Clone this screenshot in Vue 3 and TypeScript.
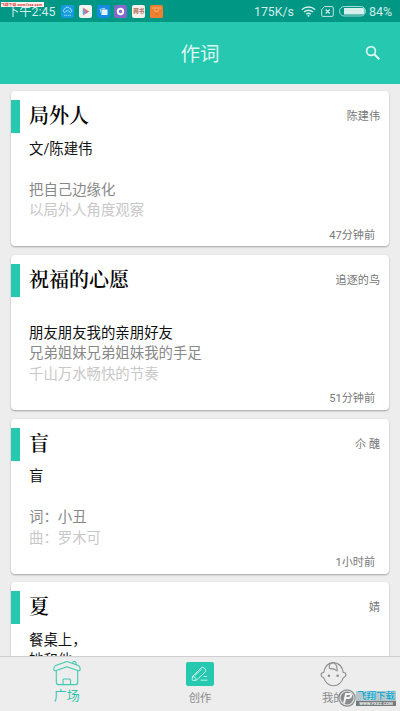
<script setup lang="ts">
interface Post {
  title: string
  author: string
  time: string
  lines: [string, string, string, string]
}

const posts: Post[] = [
  { title: '局外人', author: '陈建伟', time: '47分钟前', lines: ['文/陈建伟', '', '把自己边缘化', '以局外人角度观察'] },
  { title: '祝福的心愿', author: '追逐的鸟', time: '51分钟前', lines: ['', '朋友朋友我的亲朋好友', '兄弟姐妹兄弟姐妹我的手足', '千山万水畅快的节奏'] },
  { title: '盲', author: '尒 醜', time: '1小时前', lines: ['盲', '', '词：小丑', '曲：罗木可'] },
  { title: '夏', author: '婧', time: '1小时前', lines: ['餐桌上，', '她和他', '', ''] },
]
</script>

<template>
  <div class="screen">
    <div class="status">
      <span class="clock">下午2:45</span>
      <div class="apps">
        <svg class="app" viewBox="0 0 13 13">
          <rect width="13" height="13" rx="2" fill="#159be0" />
          <path d="M3.5 7.5a2 2 0 0 1 .3-3.6 2.7 2.7 0 0 1 5-.2 2 2 0 0 1 .8 3.8L6.5 5.5z" fill="none" stroke="#b9e6fa" stroke-width=".9" />
          <path d="M3 10.3h7" stroke="#8bd2f3" stroke-width="1" stroke-dasharray="1.5 .4" />
        </svg>
        <svg class="app" viewBox="0 0 13 13">
          <rect width="13" height="13" rx="2" fill="#f1f4f1" />
          <path d="M3.8 2.5v8l3-4z" fill="#52a9dc" />
          <path d="M3.8 2.5l6.5 4-3 1.5z" fill="#ec6a5b" />
          <path d="M3.8 10.5l3.5-4.2 1.5 1.3z" fill="#a565b9" />
        </svg>
        <svg class="app" viewBox="0 0 13 13">
          <rect width="13" height="13" rx="2" fill="#168be0" />
          <path d="M2.5 4l5-1.2.8 1.3H4v5z" fill="#a9dafa" />
          <rect x="4.5" y="4.5" width="6" height="5.5" rx=".5" fill="#e5f6ff" />
        </svg>
        <svg class="app" viewBox="0 0 13 13">
          <rect width="13" height="13" rx="2" fill="#8269cb" />
          <circle cx="6.5" cy="6.5" r="2.7" fill="none" stroke="#fff" stroke-width="2" />
        </svg>
        <span class="app read">网书</span>
        <svg class="app" viewBox="0 0 13 13">
          <rect width="13" height="13" rx="1.5" fill="#ef7f31" />
          <path d="M2 3h9M4.5 4.5a2 2 0 0 0 4 0" fill="none" stroke="#f9bc86" stroke-width=".9" />
          <path d="M5 9h3" stroke="#d9631b" stroke-width=".8" />
        </svg>
      </div>
      <span class="speed">175K/s</span>
      <svg class="wifi" viewBox="0 0 15 11">
        <g fill="none" stroke="#d3eeea" stroke-width="1.4">
          <path d="M.8 3.7a9.8 9.8 0 0 1 13.4 0" />
          <path d="M3 6a6.6 6.6 0 0 1 9 0" />
          <path d="M5.2 8.2a3.4 3.4 0 0 1 4.6 0" />
        </g>
        <circle cx="7.5" cy="9.7" r="1" fill="#d3eeea" />
      </svg>
      <svg class="sim" viewBox="0 0 13 11">
        <path d="M3.5.6H11a1.3 1.3 0 0 1 1.3 1.3v7.2a1.3 1.3 0 0 1-1.3 1.3H2A1.3 1.3 0 0 1 .7 9.1V3.4z" fill="none" stroke="#bfe5e0" />
        <path d="M4.7 3.5l4 4m0-4l-4 4" stroke="#d3eeea" stroke-width="1.2" />
      </svg>
      <svg class="battery" viewBox="0 0 27 11">
        <rect x=".5" y=".5" width="26" height="9.5" rx="4.7" fill="none" stroke="#a5dad3" />
        <path d="M5 2h18.5a2 2 0 0 1 2 2v2.500a2 2 0 0 1-2 2H5z" fill="#d6efec" />
      </svg>
      <span class="percent">84%</span>
      <span class="stamp">飞翔下载 www.fxxz.com</span>
    </div>

    <header class="bar">
      <h1>作词</h1>
      <svg class="search" viewBox="0 0 16 16">
        <circle cx="6" cy="6" r="4.4" fill="none" stroke="#def8f3" stroke-width="1.7" />
        <path d="M9.3 9.3l5 5" stroke="#def8f3" stroke-width="2" />
      </svg>
    </header>

    <main class="feed">
      <article v-for="post in posts" :key="post.title" class="card">
        <div class="top">
          <h2>{{ post.title }}</h2>
          <span class="author">{{ post.author }}</span>
        </div>
        <div class="lyrics">
          <p v-for="(line, i) in post.lines" :key="i">{{ line }}</p>
        </div>
        <div class="time">{{ post.time }}</div>
      </article>
    </main>

    <nav class="tabs">
      <div class="tab active">
        <svg viewBox="0 0 28 26">
          <g fill="none" stroke="#42c9b1" stroke-width="1.1" stroke-linejoin="round" stroke-linecap="round">
            <path d="M14 1.500L2.600 5.500Q.7 6.500.8 9.800q.5 1.300 2.500.7L14 6.800l10.700 3.700q2 .6 2.500-.7.100-3.300-1.800-4.300z" />
            <path d="M3.300 10.700v11.600a2.300 2.300 0 0 0 2.300 2.300h16.800a2.300 2.300 0 0 0 2.300-2.300V10.700" />
            <path d="M10 24.500V20a1 1 0 0 1 1-1h5.500a1 1 0 0 1 1 1v4.500M19.500 3.300q0-2 1.800-2t1.900 3.400" />
          </g>
        </svg>
        <span>广场</span>
      </div>
      <div class="tab">
        <svg viewBox="0 0 28 26">
          <rect y="1" width="28" height="24" rx="2" fill="#26c8af" />
          <g fill="none" stroke="#c4f5eb" stroke-width="1" stroke-linejoin="round" stroke-linecap="round">
            <path d="M6.500 15.500l8.800-8.800q1.500-1 3 .3l1 1.200q1 1.300 0 2.600l-8.700 8.300-3.700.5q-1.400-.6-.4-4.100z" />
            <path d="M7 15.300q2.800.2 3.300 3.500M9 14.500l6.500-6.300M15 19.200h6M18 15.500h2.500" />
          </g>
        </svg>
        <span>创作</span>
      </div>
      <div class="tab mine">
        <svg viewBox="0 0 28 26">
          <g fill="none" stroke="#8b8b8b" stroke-width="1.1" stroke-linecap="round" stroke-linejoin="round">
            <path d="M3.800 11.500C5 5.500 8.500 1.400 13.500 1.200 19 1.200 23 5 24.200 11.500c3.600.3 3.600 4.300 0 5.300C22.300 22.500 18.500 25.200 14 25.200S5.700 22.500 3.800 16.800C.2 15.800.2 11.800 3.800 11.500z" />
            <path d="M13.200 1.300C9.800 2.300 8.500 5 10.200 7.500c2.300-.2 5.300.4 7.600 2.300.2-3-.2-6-3-8.300" />
          </g>
          <circle cx="9.300" cy="14.800" r="1.300" fill="#8b8b8b" />
          <circle cx="18.300" cy="14.800" r="1.300" fill="#8b8b8b" />
        </svg>
        <span>我的</span>
      </div>
      <div class="watermark">
        <svg viewBox="0 0 18 18">
          <circle cx="9" cy="9" r="8.700" fill="#868b8c" />
          <circle cx="9" cy="9" r="7" fill="none" stroke="#dce1e1" stroke-width="1.2" />
          <path d="M6 14.500L8 5h5.500M7.200 9h3.500q2.500-.3 2.500-3.500" fill="none" stroke="#f3f3f3" stroke-width="2" />
        </svg>
        <div class="label"><b>飞翔下载</b><small>WWW.FXXZ.COM</small></div>
      </div>
    </nav>
  </div>
</template>

<style>
body {
  margin: 0;
  overflow: hidden;
}
</style>

<style scoped>
.screen {
  width: 400px;
  height: 711px;
  display: flex;
  flex-direction: column;
  overflow: hidden;
  background: #ededed;
  font-family: Roboto, "Noto Sans CJK SC", sans-serif;
}
h1, h2, p { margin: 0; font-weight: 400; }
.status {
  position: relative;
  flex: none;
  display: flex;
  align-items: center;
  box-sizing: border-box;
  height: 22px;
  padding: 1px 7px 0 7px;
  background: #009785;
  color: #d3eeea;
  font-size: 12px;
  line-height: 20px;
  white-space: nowrap;
}
.clock { width: 54px; padding-top: 1px; font-size: 12.3px; line-height: 19px; }
.apps { display: flex; gap: 4.8px; flex: 1; }
.app { display: block; width: 13px; height: 13px; }
.read {
  border-radius: 2px;
  background: #f6efea;
  color: #b36b5c;
  font-size: 5.5px;
  font-weight: 700;
  line-height: 12px;
  text-align: center;
}
.speed { width: 47px; font-size: 12.3px; }
.wifi { width: 15px; height: 11px; margin-right: 5px; }
.sim { width: 13px; height: 11px; margin-right: 5px; }
.battery { width: 27px; height: 11px; margin-right: 3px; }
.percent { width: 24px; font-size: 12.5px; }
.stamp {
  position: absolute;
  left: 1px;
  top: 2px;
  width: 43px;
  height: 5px;
  overflow: hidden;
  background: #fbf6f3;
  color: #d83a37;
  font-size: 3.8px;
  font-weight: 700;
  line-height: 5px;
}
.bar {
  position: relative;
  flex: none;
  display: flex;
  align-items: center;
  justify-content: center;
  box-sizing: border-box;
  height: 62px;
  padding-top: 3px;
  background: #26c8b0;
}
h1 { color: #def8f3; font-size: 19.5px; line-height: 28px; }
.search { position: absolute; right: 19px; top: 23px; width: 16px; height: 16px; }
.feed {
  flex: 1;
  min-height: 0;
  display: flex;
  flex-direction: column;
  gap: 8.8px;
  overflow: hidden;
  padding: 7px 11px 0;
}
.card {
  flex: none;
  display: flex;
  flex-direction: column;
  box-sizing: border-box;
  height: 155px;
  padding-top: 9px;
  border-radius: 4px;
  background: #fff;
  box-shadow: 0 1px 2px rgba(0, 0, 0, .32);
}
.top {
  display: flex;
  align-items: center;
  box-sizing: border-box;
  height: 33px;
  padding: 0 9px 3px 0;
  border-left: 9px solid #26c8af;
}
h2 {
  flex: 1;
  padding-left: 9px;
  color: #050505;
  font-family: "Noto Serif CJK SC", "Noto Serif SC", "Source Han Serif SC", "AR PL UMing CN", "Noto Sans CJK SC", serif;
  font-size: 20px;
  font-weight: 600;
  line-height: 30px;
}
.author { color: #777; font-size: 11.1px; }
.lyrics { padding: 6.5px 18px 0; height: 82px; }
.lyrics p {
  height: 20.5px;
  color: #111;
  font-size: 14.4px;
  line-height: 20.5px;
  white-space: nowrap;
}
.lyrics p:nth-child(3) { color: #888; }
.lyrics p:nth-child(4) { color: #c8c8c8; }
.time { padding: 6px 14px 0; color: #777; font-size: 11.1px; line-height: 16px; text-align: right; }
.tabs {
  position: relative;
  flex: none;
  display: flex;
  box-sizing: border-box;
  height: 55px;
  padding-top: 3px;
  border-top: 1px solid #cfcfcf;
  background: #ededed;
}
.tab {
  flex: 1;
  display: flex;
  flex-direction: column;
  align-items: center;
  color: #8b8b8b;
  font-size: 11.3px;
  line-height: 16px;
}
.tab svg { width: 28px; height: 26px; margin-top: 1px; }
.tab span { margin-top: 4px; }
.active { color: #36c5ad; font-size: 13px; }
.active svg { margin-top: 0; }
.active span { margin-top: 2px; }
.mine svg { width: 27px; }
.watermark {
  position: absolute;
  left: 338px;
  top: 32px;
  display: flex;
  align-items: center;
}
.watermark svg { width: 18px; height: 18px; }
.label {
  display: flex;
  flex-direction: column;
  align-items: center;
  width: 40px;
  height: 15px;
  background: #b4c4c7;
}
.label b { color: #22a9cd; font-size: 9.5px; line-height: 10px; text-shadow: 0 0 1px #fff; }
.label small { width: 40px; background: #737b7d; color: #eee; font-size: 4.3px; font-weight: 700; line-height: 5px; text-align: center; }
</style>
